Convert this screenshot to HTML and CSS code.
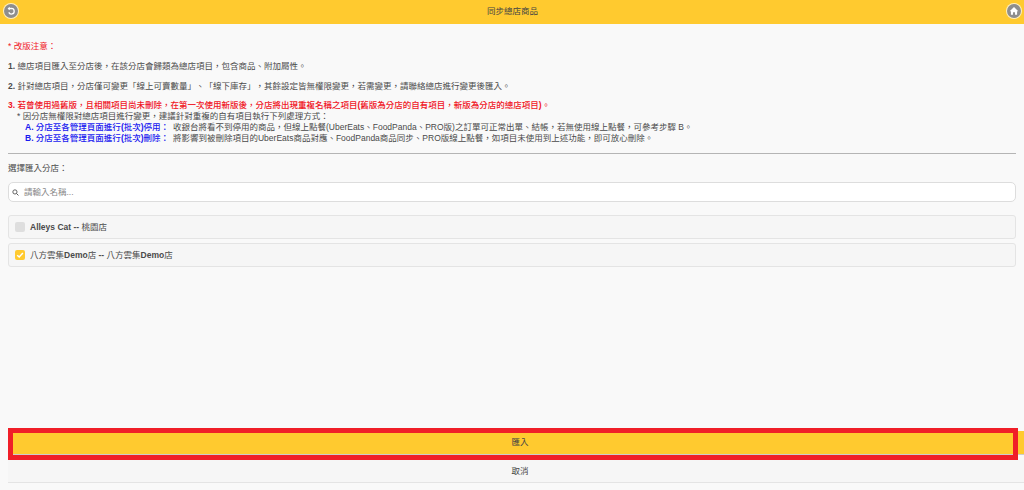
FILE: index.html
```html
<!DOCTYPE html>
<html lang="zh-Hant">
<head>
<meta charset="utf-8">
<title>同步總店商品</title>
<link rel="stylesheet" href="styles.css">
</head>
<body>
<div class="page">
  <header class="topbar">
    <span class="round-btn">
      <svg viewBox="0 0 14 14" width="12" height="12"><path d="M3.6 4.2 L7.6 4 A3.3 3.3 0 1 1 4.4 8.6" fill="none" stroke="#fff" stroke-width="1.5"/><path d="M5.6 1.9 V6.2 L3 4.1 Z" fill="#fff"/></svg>
    </span>
    <h1 class="title">同步總店商品</h1>
    <span class="round-btn">
      <svg viewBox="0 0 14 14" width="12" height="12"><path d="M7 2.4 L12 7.2 H10.6 V11.4 H8.2 V8.4 H5.8 V11.4 H3.4 V7.2 H2 Z" fill="#fff"/></svg>
    </span>
  </header>
  <main class="content">
    <section class="notice">
      <p class="line red head">* 改版注意：</p>
      <p class="line item"><b>1.</b> 總店項目匯入至分店後，在該分店會歸類為總店項目，包含商品、附加屬性。</p>
      <p class="line item"><b>2.</b> 針對總店項目，分店僅可變更「線上可賣數量」、「線下庫存」，其餘設定皆無權限變更，若需變更，請聯絡總店進行變更後匯入。</p>
      <p class="line item red med"><b>3.</b> 若曾使用過舊版，且相關項目尚未刪除，在第一次使用新版後，分店將出現重複名稱之項目<b>(</b>舊版為分店的自有項目，新版為分店的總店項目<b>)</b>。</p>
      <p class="line sub">* 因分店無權限對總店項目進行變更，建議針對重複的自有項目執行下列處理方式：</p>
      <p class="line subsub"><span class="blue med label"><b>A.</b> 分店至各管理頁面進行<b>(</b>批次<b>)</b>停用：</span> 收銀台將看不到停用的商品，但線上點餐(UberEats、FoodPanda、PRO版)之訂單可正常出單、結帳，若無使用線上點餐，可參考步驟 B。</p>
      <p class="line subsub"><span class="blue med label"><b>B.</b> 分店至各管理頁面進行<b>(</b>批次<b>)</b>刪除：</span> 將影響到被刪除項目的UberEats商品對應、FoodPanda商品同步、PRO版線上點餐，如項目未使用到上述功能，即可放心刪除。</p>
    </section>
    <hr class="divider">
    <p class="select-label">選擇匯入分店：</p>
    <div class="search">
      <svg viewBox="0 0 10 10" width="7" height="7"><circle cx="4.2" cy="4.2" r="3" fill="none" stroke="#555" stroke-width="1.3"/><path d="M6.4 6.4 L9.2 9.2" stroke="#555" stroke-width="1.4"/></svg>
      <span>請輸入名稱...</span>
    </div>
    <div class="store-list">
      <div class="store"><span class="check"></span><span><b>Alleys Cat --</b> 桃園店</span></div>
      <div class="store"><span class="check on"><svg viewBox="0 0 10 10" width="8" height="8"><path d="M1.5 5.2 L4 7.6 L8.6 2.4" fill="none" stroke="#fff" stroke-width="1.8"/></svg></span><span>八方雲集<b>Demo</b>店 <b>--</b> 八方雲集<b>Demo</b>店</span></div>
    </div>
  </main>
  <footer class="actions">
    <button class="action primary">匯入</button>
    <button class="action">取消</button>
    <div class="highlight"></div>
  </footer>
</div>
</body>
</html>
```
FILE: styles.css
```css
* { box-sizing: border-box; }
html, body { margin: 0; height: 100%; }
body {
  background: #f9f9f9;
  color: #4a4a4a;
  font: 8.5px/11px "Liberation Sans", "Noto Sans CJK TC", sans-serif;
  overflow: hidden;
}
.page { display: flex; flex-direction: column; height: 490px; }
.topbar {
  flex: none;
  height: 24px;
  background: #ffca2f;
  display: flex;
  align-items: center;
  justify-content: space-between;
  padding: 0 3px 2px 4px;
}
.title { margin: 0; font-size: 8.5px; font-weight: 400; color: #444; }
.round-btn {
  width: 14px;
  height: 14px;
  border-radius: 50%;
  background: #8e8e8e;
  box-shadow: 0 0 0 1px rgba(255,255,255,.7);
  display: flex;
  align-items: center;
  justify-content: center;
}
.content { flex: 1; padding: 17px 8px 0; }
.line { margin: 0; }
.item { margin-top: 8.5px; }
.head + .item { margin-top: 9px; }
.red { color: #f0141e; }
.blue { color: #1a1af0; }
.med { font-weight: 500; }
.label { margin-right: 1.5px; }
.sub { padding-left: 9px; }
.subsub { padding-left: 17px; }
.divider { margin: 9px 0 0; border: 0; border-top: 1px solid #b5b5b5; }
.select-label { margin: 9px 0 0; }
.search {
  margin-top: 8px;
  height: 20px;
  background: #fff;
  border: 1px solid #ddd;
  border-radius: 5px;
  display: flex;
  align-items: center;
  gap: 5px;
  padding: 0 3px;
  color: #888;
}
.store-list { margin-top: 13px; display: flex; flex-direction: column; gap: 4px; }
.store {
  height: 24px;
  background: #f6f6f6;
  border: 1px solid #e4e4e4;
  border-radius: 3px;
  display: flex;
  align-items: center;
  gap: 5px;
  padding: 0 6px;
}
.check {
  width: 10px;
  height: 10px;
  border-radius: 2px;
  background: #dedede;
  display: flex;
  align-items: center;
  justify-content: center;
}
.check.on { background: #ffca2f; }
.actions {
  flex: none;
  position: relative;
  display: flex;
  flex-direction: column;
  gap: 5px;
  padding: 0 0 7px 8px;
}
.action {
  height: 23px;
  border: 0;
  border-bottom: 1px solid #e4e4e4;
  background: #f6f6f6;
  color: #444;
  font: inherit;
  padding: 0 0 0 8px;
}
.action.primary { height: 24px; background: #ffca2f; border-bottom-color: #ccc; }
.highlight {
  position: absolute;
  left: 8px;
  top: -3px;
  width: 1010px;
  height: 32px;
  border: 5px solid #f01e28;
}
```
